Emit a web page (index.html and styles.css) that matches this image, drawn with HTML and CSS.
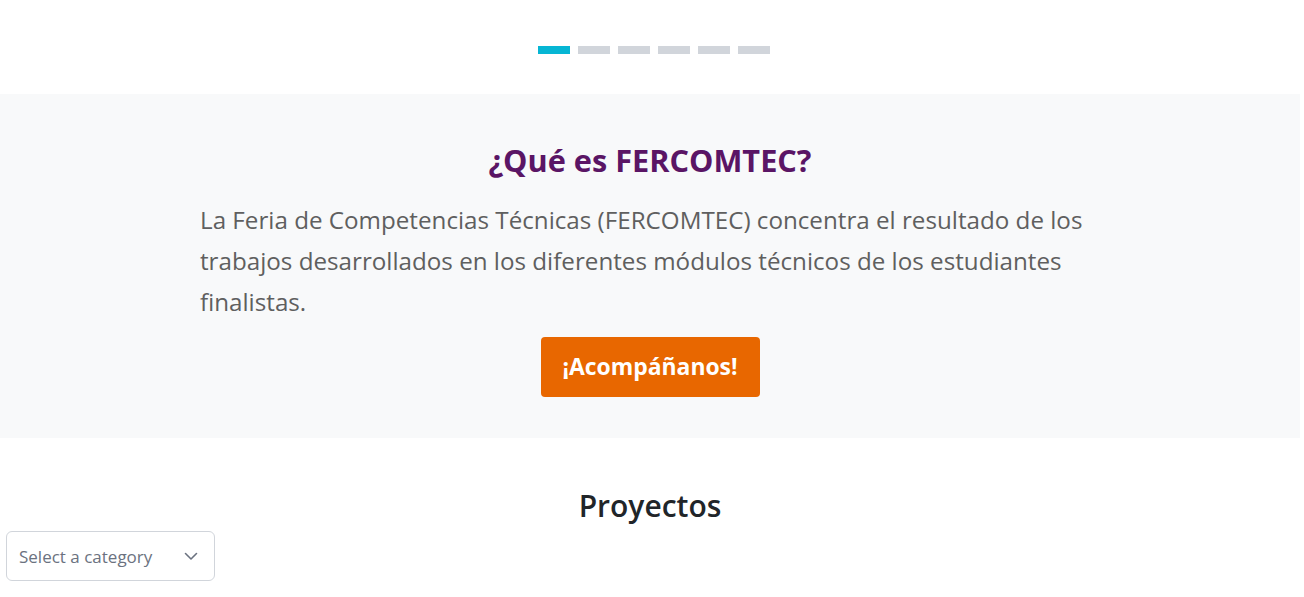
FILE: index.html
```html
<!DOCTYPE html>
<html lang="es">
<head>
<meta charset="utf-8">
<title>FERCOMTEC</title>
<link rel="stylesheet" href="styles.css">
</head>
<body>
  <div class="indicators">
    <span class="bar active"></span>
    <span class="bar"></span>
    <span class="bar"></span>
    <span class="bar"></span>
    <span class="bar"></span>
    <span class="bar"></span>
  </div>
  <section class="about">
    <h2 class="about-title">¿Qué es FERCOMTEC?</h2>
    <p class="about-text">La Feria de Competencias Técnicas (FERCOMTEC) concentra el resultado de los trabajos desarrollados en los diferentes módulos técnicos de los estudiantes finalistas.</p>
    <a class="btn" href="#">¡Acompáñanos!</a>
  </section>
  <section class="projects">
    <h2 class="projects-title">Proyectos</h2>
    <div class="select">
      <span class="select-label">Select a category</span>
      <svg class="chev" width="16" height="16" viewBox="0 0 16 16"><path d="M2.5 5.5 L8 11 L13.5 5.5" fill="none" stroke="#6b7280" stroke-width="1.6" stroke-linecap="round" stroke-linejoin="round"/></svg>
    </div>
  </section>
</body>
</html>
```
FILE: styles.css
```css
* { box-sizing: border-box; }
html, body { margin: 0; padding: 0; }
body {
  width: 1300px;
  background: #fff;
  font-family: "Open Sans", "Noto Sans", sans-serif;
  color: #212529;
}
.indicators {
  display: flex;
  justify-content: center;
  gap: 8px;
  padding: 46px 0 40px 8px;
}
.bar {
  width: 32px;
  height: 8px;
  background: #d1d5db;
}
.bar.active { background: #06b6d4; }
.about {
  background: #f8f9fa;
  display: flex;
  flex-direction: column;
  align-items: center;
  padding: 44px 0 41px;
}
.about-title {
  margin: 0;
  font-size: 30.7px;
  line-height: 44px;
  font-weight: 700;
  color: #5a1565;
}
.about-text {
  width: 900px;
  margin: 17px 0 15px;
  font-size: 24.2px;
  line-height: 41px;
  color: #5f5f5f;
}
.btn {
  display: block;
  width: 219px;
  height: 60px;
  line-height: 60px;
  text-align: center;
  background: #e86700;
  color: #fff;
  font-size: 22.9px;
  font-weight: 700;
  border-radius: 4px;
  text-decoration: none;
}
.projects {
  padding: 46px 0 0 6px;
}
.projects-title {
  margin: 0;
  text-align: center;
  font-size: 30px;
  line-height: 44px;
  font-weight: 600;
  color: #212529;
  padding-right: 6px;
}
.select {
  margin-top: 3px;
  width: 209px;
  height: 50px;
  border: 1px solid #d1d5db;
  border-radius: 6px;
  display: flex;
  align-items: center;
  justify-content: space-between;
  padding: 0 15px 0 12px;
  background: #fff;
}
.select-label {
  font-size: 17px;
  color: #6b7280;
}
.chev { display: block; }
```
